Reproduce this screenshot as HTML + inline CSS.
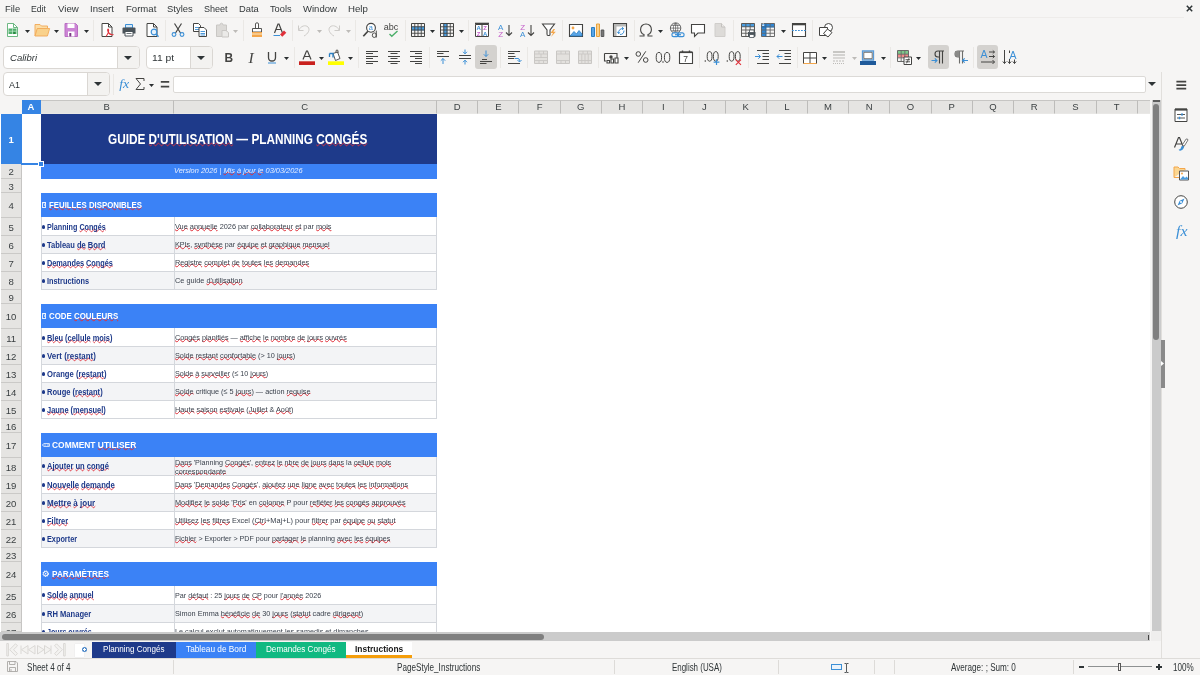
<!DOCTYPE html>
<html><head><meta charset="utf-8"><title>Instructions - Calc</title>
<style>
*{box-sizing:border-box;margin:0;padding:0}
html,body{width:1200px;height:675px;overflow:hidden;background:#f6f5f4}
body{font-family:"Liberation Sans",sans-serif;font-size:10px;color:#2e3436;position:relative}
div,span,i,svg{position:absolute}
.t{white-space:nowrap;transform-origin:0 50%;line-height:1}
u{position:static;text-decoration:underline wavy #e0303a;text-decoration-thickness:.5px;text-underline-offset:-1.7px;text-decoration-skip-ink:none}
.box{background:#fff;border:1px solid #dad7d3;border-radius:4px}
.bb{background:#f3f2f0;border-left:1px solid #dad7d3}
.ar{width:0;height:0;border-left:4px solid transparent;border-right:4px solid transparent;border-top:4px solid #2e3436}
.dd{width:0;height:0;border-left:2.3px solid transparent;border-right:2.3px solid transparent;border-top:2.8px solid #2e3436}
.dg{border-top-color:#bdbbb8}
.sp{width:1px;background:#eae8e5}
.ac{background:#d4d2cf;border-radius:3px}
.ch{top:100px;height:14px;background:#e5e4e2;border-right:1px solid #bdbcba;border-top:1px solid #c6c5c3;border-bottom:1px solid #e9e8e6;font-size:9.5px;line-height:12px;text-align:center;color:#3a3f41}
.rh{left:1px;width:21px;background:#e5e4e2;border-right:1px solid #c6c5c3;border-bottom:1px solid #cac9c7;font-size:9.6px;letter-spacing:-.2px;text-align:center;color:#3a3f41}
.sel{background:#3584e4;color:#fff;font-weight:bold;border-color:#3584e4}
.bd{left:41px;width:396px;background:#3b82f6}
.rw{left:41px;width:396px;background:#fff;border:1px solid #d4d7dc;border-top:none}
.rw.g{background:#f3f4f6}
.rw i{left:131.5px;top:0;bottom:0;width:1px;background:#d4d7dc}
.ss{width:1px;top:660px;height:14px;background:#dddbd8}
.tab{top:642px;height:15.6px}
svg{overflow:visible}
</style></head>
<body>
<div id="w" style="left:0;top:0;width:1200px;height:675px;will-change:transform">
<div style="left:0;top:17px;width:1184px;height:1px;background:#eeecea"></div>
<svg style="left:1186px;top:5px;width:7px;height:7px" viewBox="0 0 7 7"><path d="M.8 .8 6.2 6.2M6.2 .8 .8 6.2" stroke="#2e3436" stroke-width="1.5" fill="none"/></svg>
<div class="box" style="left:3px;top:46px;width:137px;height:22.5px"><div class="bb" style="right:0;top:0;bottom:0;width:22px;border-radius:0 3px 3px 0"></div><i class="ar" style="right:7px;top:8.5px"></i></div>
<div class="box" style="left:145.5px;top:46px;width:67px;height:22.5px"><div class="bb" style="right:0;top:0;bottom:0;width:22px;border-radius:0 3px 3px 0"></div><i class="ar" style="right:7px;top:8.5px"></i></div>
<div class="box" style="left:3px;top:72px;width:106.5px;height:23.5px"><div class="bb" style="right:0;top:0;bottom:0;width:22px;border-radius:0 3px 3px 0"></div><i class="ar" style="right:7px;top:8.5px"></i></div>
<div style="left:173px;top:76px;width:973px;height:16.5px;background:#fff;border:1px solid #dcdad7;border-radius:2px"></div>
<i class="ar" style="left:1148px;top:82px"></i>
<div style="left:0;top:100px;width:1151.5px;height:532.4px;background:#fff"></div>
<div style="left:0;top:100px;width:22px;height:14px;background:#f6f5f4"></div>
<div class="ch sel" style="left:22.00px;width:19.00px">A</div>
<div class="ch" style="left:41.00px;width:132.50px">B</div>
<div class="ch" style="left:173.50px;width:263.50px">C</div>
<div class="ch" style="left:437.00px;width:41.22px">D</div>
<div class="ch" style="left:478.22px;width:41.22px">E</div>
<div class="ch" style="left:519.44px;width:41.22px">F</div>
<div class="ch" style="left:560.66px;width:41.22px">G</div>
<div class="ch" style="left:601.88px;width:41.22px">H</div>
<div class="ch" style="left:643.10px;width:41.22px">I</div>
<div class="ch" style="left:684.32px;width:41.22px">J</div>
<div class="ch" style="left:725.54px;width:41.22px">K</div>
<div class="ch" style="left:766.76px;width:41.22px">L</div>
<div class="ch" style="left:807.98px;width:41.22px">M</div>
<div class="ch" style="left:849.20px;width:41.22px">N</div>
<div class="ch" style="left:890.42px;width:41.22px">O</div>
<div class="ch" style="left:931.64px;width:41.22px">P</div>
<div class="ch" style="left:972.86px;width:41.22px">Q</div>
<div class="ch" style="left:1014.08px;width:41.22px">R</div>
<div class="ch" style="left:1055.30px;width:41.22px">S</div>
<div class="ch" style="left:1096.52px;width:41.22px">T</div>
<div class="ch" style="left:1137.74px;width:13.76px"></div>
<div class="rh sel" style="top:114px;height:50.0px;line-height:51.4px;overflow:hidden">1</div>
<div class="rh" style="top:164px;height:15.0px;line-height:16.4px;overflow:hidden">2</div>
<div class="rh" style="top:179px;height:14.0px;line-height:15.4px;overflow:hidden">3</div>
<div class="rh" style="top:193px;height:25.0px;line-height:26.4px;overflow:hidden">4</div>
<div class="rh" style="top:218px;height:18.0px;line-height:19.4px;overflow:hidden">5</div>
<div class="rh" style="top:236px;height:18.0px;line-height:19.4px;overflow:hidden">6</div>
<div class="rh" style="top:254px;height:18.0px;line-height:19.4px;overflow:hidden">7</div>
<div class="rh" style="top:272px;height:18.0px;line-height:19.4px;overflow:hidden">8</div>
<div class="rh" style="top:290px;height:14.0px;line-height:15.4px;overflow:hidden">9</div>
<div class="rh" style="top:304px;height:25.0px;line-height:26.4px;overflow:hidden">10</div>
<div class="rh" style="top:329px;height:18.0px;line-height:19.4px;overflow:hidden">11</div>
<div class="rh" style="top:347px;height:18.0px;line-height:19.4px;overflow:hidden">12</div>
<div class="rh" style="top:365px;height:18.0px;line-height:19.4px;overflow:hidden">13</div>
<div class="rh" style="top:383px;height:18.0px;line-height:19.4px;overflow:hidden">14</div>
<div class="rh" style="top:401px;height:18.0px;line-height:19.4px;overflow:hidden">15</div>
<div class="rh" style="top:419px;height:14.0px;line-height:15.4px;overflow:hidden">16</div>
<div class="rh" style="top:433px;height:25.0px;line-height:26.4px;overflow:hidden">17</div>
<div class="rh" style="top:458px;height:18.0px;line-height:19.4px;overflow:hidden">18</div>
<div class="rh" style="top:476px;height:18.0px;line-height:19.4px;overflow:hidden">19</div>
<div class="rh" style="top:494px;height:18.0px;line-height:19.4px;overflow:hidden">20</div>
<div class="rh" style="top:512px;height:18.0px;line-height:19.4px;overflow:hidden">21</div>
<div class="rh" style="top:530px;height:18.0px;line-height:19.4px;overflow:hidden">22</div>
<div class="rh" style="top:548px;height:14.0px;line-height:15.4px;overflow:hidden">23</div>
<div class="rh" style="top:562px;height:25.0px;line-height:26.4px;overflow:hidden">24</div>
<div class="rh" style="top:587px;height:18.0px;line-height:19.4px;overflow:hidden">25</div>
<div class="rh" style="top:605px;height:18.0px;line-height:19.4px;overflow:hidden">26</div>
<div class="rh" style="top:623px;height:9.4px;line-height:19.4px;overflow:hidden">27</div>
<div style="left:41px;top:114px;width:396px;height:50px;background:#1e3a8a"></div>
<div style="left:41px;top:164px;width:396px;height:14.8px;background:#3b82f6"></div>
<div style="left:21px;top:163.3px;width:20px;height:1.4px;background:#3584e4"></div>
<div style="left:38.4px;top:161.4px;width:5.2px;height:5.2px;background:#3584e4;border:.8px solid #fff"></div>
<div class="bd" style="top:193px;height:24px"></div>
<div class="rw" style="top:217px;height:19px"><i></i></div>
<div class="rw g" style="top:236px;height:18px"><i></i></div>
<div class="rw" style="top:254px;height:18px"><i></i></div>
<div class="rw g" style="top:272px;height:18px"><i></i></div>
<div class="bd" style="top:304px;height:24px"></div>
<div class="rw" style="top:328px;height:19px"><i></i></div>
<div class="rw g" style="top:347px;height:18px"><i></i></div>
<div class="rw" style="top:365px;height:18px"><i></i></div>
<div class="rw g" style="top:383px;height:18px"><i></i></div>
<div class="rw" style="top:401px;height:18px"><i></i></div>
<div class="bd" style="top:433px;height:24px"></div>
<div class="rw g" style="top:457px;height:19px"><i></i></div>
<div class="rw" style="top:476px;height:18px"><i></i></div>
<div class="rw g" style="top:494px;height:18px"><i></i></div>
<div class="rw" style="top:512px;height:18px"><i></i></div>
<div class="rw g" style="top:530px;height:18px"><i></i></div>
<div class="bd" style="top:562px;height:24px"></div>
<div class="rw" style="top:586px;height:19px"><i></i></div>
<div class="rw g" style="top:605px;height:18px"><i></i></div>
<div class="rw" style="top:623px;height:18px"><i></i></div>
<div style="left:41.7px;top:201.6px;width:4.8px;height:6.6px;border:.8px solid #fff;opacity:.85"></div><span class="t" style="left:43.1px;top:202.6px;font-size:4.8px;color:#fff;font-weight:bold">?</span>
<div style="left:41.7px;top:312.6px;width:4.8px;height:6.6px;border:.8px solid #fff;opacity:.85"></div><span class="t" style="left:43.1px;top:313.6px;font-size:4.8px;color:#fff;font-weight:bold">?</span>
<svg style="left:41.5px;top:441.5px;width:8px;height:6px" viewBox="0 0 8 6"><path d="M.3 3 2 1.6H7.4V4.4H2Z" fill="none" stroke="#fff" stroke-width=".8"/><path d="M3 2.2V3.8M6 1.8V4.2" stroke="#fff" stroke-width=".6"/></svg>
<svg style="left:42px;top:569.8px;width:7.4px;height:7.4px" viewBox="0 0 8 8"><circle cx="4" cy="4" r="2.9" fill="none" stroke="#fff" stroke-width="1.1" stroke-dasharray="1.3 .6"/><circle cx="4" cy="4" r="2.3" fill="none" stroke="#fff" stroke-width=".9"/><circle cx="4" cy="4" r=".8" fill="#fff"/></svg>
<div style="left:41.6px;top:224.85px;width:3.8px;height:3.8px;border-radius:50%;background:#1e3a8a"></div>
<div style="left:41.6px;top:242.85px;width:3.8px;height:3.8px;border-radius:50%;background:#1e3a8a"></div>
<div style="left:41.6px;top:260.85px;width:3.8px;height:3.8px;border-radius:50%;background:#1e3a8a"></div>
<div style="left:41.6px;top:278.85px;width:3.8px;height:3.8px;border-radius:50%;background:#1e3a8a"></div>
<div style="left:41.6px;top:335.75px;width:3.8px;height:3.8px;border-radius:50%;background:#1e3a8a"></div>
<div style="left:41.6px;top:353.75px;width:3.8px;height:3.8px;border-radius:50%;background:#1e3a8a"></div>
<div style="left:41.6px;top:371.75px;width:3.8px;height:3.8px;border-radius:50%;background:#1e3a8a"></div>
<div style="left:41.6px;top:389.75px;width:3.8px;height:3.8px;border-radius:50%;background:#1e3a8a"></div>
<div style="left:41.6px;top:407.85px;width:3.8px;height:3.8px;border-radius:50%;background:#1e3a8a"></div>
<div style="left:41.6px;top:464.45px;width:3.8px;height:3.8px;border-radius:50%;background:#1e3a8a"></div>
<div style="left:41.6px;top:482.85px;width:3.8px;height:3.8px;border-radius:50%;background:#1e3a8a"></div>
<div style="left:41.6px;top:500.85px;width:3.8px;height:3.8px;border-radius:50%;background:#1e3a8a"></div>
<div style="left:41.6px;top:518.85px;width:3.8px;height:3.8px;border-radius:50%;background:#1e3a8a"></div>
<div style="left:41.6px;top:536.85px;width:3.8px;height:3.8px;border-radius:50%;background:#1e3a8a"></div>
<div style="left:41.6px;top:593.35px;width:3.8px;height:3.8px;border-radius:50%;background:#1e3a8a"></div>
<div style="left:41.6px;top:611.75px;width:3.8px;height:3.8px;border-radius:50%;background:#1e3a8a"></div>
<div style="left:41.6px;top:629.85px;width:3.8px;height:3.8px;border-radius:50%;background:#1e3a8a"></div>
<div style="left:0;top:0;width:1150px;height:632.4px;overflow:hidden"><span class="t" id="t23" style="left:108.40px;top:131.90px;font-size:14.20px;color:#fff;font-weight:bold;transform:scaleX(0.8308)">GUIDE <u>D'UTILISATION</u> — PLANNING <u>CONGÉS</u></span>
<span class="t" id="t24" style="left:173.70px;top:166.90px;font-size:7.80px;color:#e8efff;font-style:italic;transform:scaleX(0.9504)">Version 2026 | <u>Mis</u> <u>à</u> <u>jour</u> <u>le</u> 03/03/2026</span>
<span class="t" id="t25" style="left:48.50px;top:201.05px;font-size:9.10px;color:#fff;font-weight:bold;transform:scaleX(0.8593)"><u>FEUILLES</u> <u>DISPONIBLES</u></span>
<span class="t" id="t26" style="left:48.70px;top:312.05px;font-size:9.10px;color:#fff;font-weight:bold;transform:scaleX(0.8675)">CODE <u>COULEURS</u></span>
<span class="t" id="t27" style="left:51.90px;top:441.05px;font-size:9.10px;color:#fff;font-weight:bold;transform:scaleX(0.9264)">COMMENT <u>UTILISER</u></span>
<span class="t" id="t28" style="left:51.80px;top:570.05px;font-size:9.10px;color:#fff;font-weight:bold;transform:scaleX(0.9048)"><u>PARAMÈTRES</u></span>
<span class="t" id="t29" style="left:47.40px;top:221.70px;font-size:9.40px;color:#1e3a8a;font-weight:bold;transform:scaleX(0.7675)">Planning <u>Congés</u></span>
<span class="t" id="t30" style="left:47.40px;top:239.70px;font-size:9.40px;color:#1e3a8a;font-weight:bold;transform:scaleX(0.8027)">Tableau <u>de</u> <u>Bord</u></span>
<span class="t" id="t31" style="left:47.40px;top:257.70px;font-size:9.40px;color:#1e3a8a;font-weight:bold;transform:scaleX(0.7810)"><u>Demandes</u> <u>Congés</u></span>
<span class="t" id="t32" style="left:47.40px;top:275.70px;font-size:9.40px;color:#1e3a8a;font-weight:bold;transform:scaleX(0.7833)">Instructions</span>
<span class="t" id="t33" style="left:174.80px;top:223.10px;font-size:8.00px;color:#3b424d;transform:scaleX(0.9175)"><u>Vue</u> <u>annuelle</u> 2026 par <u>collaborateur</u> <u>et</u> par <u>mois</u></span>
<span class="t" id="t34" style="left:174.80px;top:241.10px;font-size:8.00px;color:#3b424d;transform:scaleX(0.8954)"><u>KPIs</u>, <u>synthèse</u> par <u>équipe</u> <u>et</u> <u>graphique</u> <u>mensuel</u></span>
<span class="t" id="t35" style="left:174.80px;top:259.10px;font-size:8.00px;color:#3b424d;transform:scaleX(0.9109)"><u>Registre</u> <u>complet</u> <u>de</u> <u>toutes</u> <u>les</u> <u>demandes</u></span>
<span class="t" id="t36" style="left:174.80px;top:277.10px;font-size:8.00px;color:#3b424d;transform:scaleX(0.9176)">Ce guide <u>d'utilisation</u></span>
<span class="t" id="t37" style="left:47.40px;top:332.60px;font-size:9.40px;color:#1e3a8a;font-weight:bold;transform:scaleX(0.7892)"><u>Bleu</u> (<u>cellule</u> <u>mois</u>)</span>
<span class="t" id="t38" style="left:47.40px;top:350.60px;font-size:9.40px;color:#1e3a8a;font-weight:bold;transform:scaleX(0.8431)">Vert (<u>restant</u>)</span>
<span class="t" id="t39" style="left:47.40px;top:368.60px;font-size:9.40px;color:#1e3a8a;font-weight:bold;transform:scaleX(0.8151)">Orange (<u>restant</u>)</span>
<span class="t" id="t40" style="left:47.40px;top:386.60px;font-size:9.40px;color:#1e3a8a;font-weight:bold;transform:scaleX(0.8029)">Rouge (<u>restant</u>)</span>
<span class="t" id="t41" style="left:47.40px;top:404.70px;font-size:9.40px;color:#1e3a8a;font-weight:bold;transform:scaleX(0.7946)"><u>Jaune</u> (<u>mensuel</u>)</span>
<span class="t" id="t42" style="left:174.80px;top:334.00px;font-size:8.00px;color:#3b424d;transform:scaleX(0.9047)"><u>Congés</u> <u>planifiés</u> — <u>affiche</u> <u>le</u> <u>nombre</u> <u>de</u> <u>jours</u> <u>ouvrés</u></span>
<span class="t" id="t43" style="left:174.80px;top:352.00px;font-size:8.00px;color:#3b424d;transform:scaleX(0.9106)"><u>Solde</u> <u>restant</u> <u>confortable</u> (&gt; 10 <u>jours</u>)</span>
<span class="t" id="t44" style="left:174.80px;top:370.00px;font-size:8.00px;color:#3b424d;transform:scaleX(0.8962)"><u>Solde</u> <u>à</u> <u>surveiller</u> (≤ 10 <u>jours</u>)</span>
<span class="t" id="t45" style="left:174.80px;top:388.00px;font-size:8.00px;color:#3b424d;transform:scaleX(0.9094)"><u>Solde</u> critique (≤ 5 <u>jours</u>) — action <u>requise</u></span>
<span class="t" id="t46" style="left:174.80px;top:406.10px;font-size:8.00px;color:#3b424d;transform:scaleX(0.9115)"><u>Haute</u> <u>saison</u> <u>estivale</u> (<u>Juillet</u> &amp; <u>Août</u>)</span>
<span class="t" id="t47" style="left:47.40px;top:461.30px;font-size:9.40px;color:#1e3a8a;font-weight:bold;transform:scaleX(0.8026)"><u>Ajouter</u> <u>un</u> <u>congé</u></span>
<span class="t" id="t48" style="left:47.40px;top:479.70px;font-size:9.40px;color:#1e3a8a;font-weight:bold;transform:scaleX(0.8181)"><u>Nouvelle</u> <u>demande</u></span>
<span class="t" id="t49" style="left:47.40px;top:497.70px;font-size:9.40px;color:#1e3a8a;font-weight:bold;transform:scaleX(0.8571)"><u>Mettre</u> <u>à</u> <u>jour</u></span>
<span class="t" id="t50" style="left:47.40px;top:515.70px;font-size:9.40px;color:#1e3a8a;font-weight:bold;transform:scaleX(0.7963)"><u>Filtrer</u></span>
<span class="t" id="t51" style="left:47.40px;top:533.70px;font-size:9.40px;color:#1e3a8a;font-weight:bold;transform:scaleX(0.7795)">Exporter</span>
<span class="t" id="t52" style="left:174.80px;top:459.30px;font-size:8.00px;color:#3b424d;transform:scaleX(0.8963)"><u>Dans</u> 'Planning <u>Congés</u>', <u>entrez</u> <u>le</u> <u>nbre</u> <u>de</u> <u>jours</u> <u>dans</u> la <u>cellule</u> <u>mois</u></span>
<div style="left:0;top:0;width:1150px;height:475.0px;overflow:hidden"><span class="t" id="t53" style="left:174.80px;top:468.00px;font-size:8.00px;color:#3b424d;transform:scaleX(0.9196)"><u>correspondante</u></span></div>
<span class="t" id="t54" style="left:174.80px;top:481.10px;font-size:8.00px;color:#3b424d;transform:scaleX(0.9008)"><u>Dans</u> '<u>Demandes</u> <u>Congés</u>', <u>ajoutez</u> <u>une</u> <u>ligne</u> <u>avec</u> <u>toutes</u> <u>les</u> <u>informations</u></span>
<span class="t" id="t55" style="left:174.80px;top:499.10px;font-size:8.00px;color:#3b424d;transform:scaleX(0.9115)"><u>Modifiez</u> <u>le</u> <u>solde</u> '<u>Pris</u>' en <u>colonne</u> P pour <u>refléter</u> <u>les</u> <u>congés</u> <u>approuvés</u></span>
<span class="t" id="t56" style="left:174.80px;top:517.10px;font-size:8.00px;color:#3b424d;transform:scaleX(0.9213)"><u>Utilisez</u> <u>les</u> <u>filtres</u> Excel (<u>Ctrl</u>+Maj+L) pour <u>filtrer</u> par <u>équipe</u> <u>ou</u> <u>statut</u></span>
<span class="t" id="t57" style="left:174.80px;top:535.10px;font-size:8.00px;color:#3b424d;transform:scaleX(0.8909)"><u>Fichier</u> &gt; Exporter &gt; PDF pour <u>partager</u> <u>le</u> planning <u>avec</u> <u>les</u> <u>équipes</u></span>
<span class="t" id="t58" style="left:47.40px;top:590.20px;font-size:9.40px;color:#1e3a8a;font-weight:bold;transform:scaleX(0.8000)"><u>Solde</u> <u>annuel</u></span>
<span class="t" id="t59" style="left:47.40px;top:608.60px;font-size:9.40px;color:#1e3a8a;font-weight:bold;transform:scaleX(0.8073)">RH Manager</span>
<span class="t" id="t60" style="left:47.40px;top:626.70px;font-size:9.40px;color:#1e3a8a;font-weight:bold;transform:scaleX(0.7593)">Jours ouvrés</span>
<span class="t" id="t61" style="left:174.80px;top:591.60px;font-size:8.00px;color:#3b424d;transform:scaleX(0.9000)">Par <u>défaut</u> : 25 <u>jours</u> <u>de</u> <u>CP</u> pour <u>l'année</u> 2026</span>
<span class="t" id="t62" style="left:174.80px;top:610.00px;font-size:8.00px;color:#3b424d;transform:scaleX(0.9121)">Simon Emma <u>bénéficie</u> <u>de</u> 30 <u>jours</u> (<u>statut</u> cadre <u>dirigeant</u>)</span>
<span class="t" id="t63" style="left:174.80px;top:628.10px;font-size:8.00px;color:#3b424d;transform:scaleX(0.9085)">Le calcul exclut automatiquement les samedis et dimanches</span></div>
<div style="left:0;top:632.4px;width:1150.5px;height:8.2px;background:#cbcbcb"></div>
<div style="left:1.5px;top:633.6px;width:542.5px;height:6px;border-radius:3px;background:#7f7f7f"></div>
<div style="left:1147.5px;top:634.5px;width:1px;height:5px;background:#444"></div>
<div style="left:1150px;top:100px;width:12px;height:541px;background:#f6f5f4"></div>
<div style="left:1151.5px;top:100px;width:9px;height:531px;background:#cbcbcb"></div><div style="left:1153px;top:100.4px;width:7px;height:1.6px;background:#5e5e5e"></div>
<div style="left:1153.4px;top:104px;width:5.8px;height:236px;border-radius:3px;background:#7f7f7f"></div>
<div style="left:1150.5px;top:631px;width:10px;height:10px;background:#efeeed"></div>
<div style="left:1161px;top:72px;width:1px;height:586px;background:#e1dfdc"></div>
<div style="left:1160.6px;top:340px;width:4.6px;height:48px;background:#8a8a8a"></div>
<svg style="left:1161.4px;top:361px;width:3px;height:5px" viewBox="0 0 3 5"><path d="M0 0 3 2.5 0 5Z" fill="#fff"/></svg>
<div style="left:0;top:641px;width:1161px;height:17px;background:#f6f5f4"></div>
<div class="tab" style="left:92px;width:84.2px;background:#1e3a8a"></div>
<div class="tab" style="left:176.2px;width:80.2px;background:#3b82f6"></div>
<div class="tab" style="left:256.4px;width:89.9px;background:#10b981"></div>
<div class="tab" style="left:346.3px;width:65.3px;background:#fff"></div>
<div style="left:346.3px;top:655.4px;width:65.3px;height:2.2px;background:#f59e0b"></div>
<svg style="left:6px;top:643px;width:60px;height:13.5px" viewBox="0 0 60 13.5"><g fill="#f3f2f0" stroke="#dad8d5" stroke-width="1"><path d="M.8 .5H2.4V13H.8Z"/><path d="M9.5 .8 11.5 2.8 7.5 6.7 11.5 10.6 9.5 12.6 3.6 6.7Z"/><path d="M15 2.5V11M22 2.5 15.5 6.7 22 11ZM29 2.5 22.5 6.7 29 11Z"/><path d="M45 2.5V11M31.5 2.5 38 6.7 31.5 11ZM38.5 2.5 45 6.7 38.5 11Z"/><path d="M50.5 .8 48.5 2.8 52.5 6.7 48.5 10.6 50.5 12.6 56.4 6.7Z"/><path d="M57.6 .5H59.2V13H57.6Z"/></g></svg>
<div style="left:74.6px;top:643.6px;width:9.8px;height:13.8px;background:#fff;box-shadow:0 0 1px #ddd"></div>
<div style="left:82.2px;top:646.8px;width:5px;height:5px;border-radius:50%;background:#4a86c8"></div>
<div style="left:83.4px;top:649px;width:2.6px;height:.7px;background:#fff"></div><div style="left:84.35px;top:648px;width:.7px;height:2.6px;background:#fff"></div>
<svg style="left:6.5px;top:661px;width:11px;height:11px" viewBox="0 0 11 11"><path d="M.5 .5H9L10.5 2V10.5H.5Z" fill="#f6f5f4" stroke="#aaa8a5" stroke-width=".9"/><path d="M2.5 .5V3.5H8V.5M2.5 10.5V6.5H8.5V10.5M4 8V10.5" fill="none" stroke="#aaa8a5" stroke-width=".9"/></svg>
<div style="left:0;top:658px;width:1200px;height:1px;background:#dedcd9"></div>
<div class="ss" style="left:173.3px"></div>
<div class="ss" style="left:613.5px"></div>
<div class="ss" style="left:777.5px"></div>
<div class="ss" style="left:874.0px"></div>
<div class="ss" style="left:893.5px"></div>
<div class="ss" style="left:1072.5px"></div>
<div style="left:1088px;top:666.4px;width:64px;height:1px;background:#8e9192"></div>
<div style="left:1118.3px;top:663px;width:3px;height:8px;border:1px solid #555;background:#f6f5f4"></div>
<div style="left:1078.5px;top:666px;width:5.5px;height:1.6px;background:#2e3436"></div>
<div style="left:1156px;top:666px;width:6.4px;height:1.6px;background:#2e3436"></div><div style="left:1158.4px;top:663.6px;width:1.6px;height:6.4px;background:#2e3436"></div>
<div style="left:830.5px;top:664px;width:11px;height:6.4px;border:1px solid #3b8fd6;background:#eaf3fb"></div>
<svg style="left:843.5px;top:662.5px;width:5px;height:10px" viewBox="0 0 5 10"><path d="M.5 .5H2Q2.5 .6 2.5 1.2V8.8Q2.5 9.4 2 9.5H.5M4.5 .5H3Q2.5 .6 2.5 1.2M2.5 8.8Q2.5 9.4 3 9.5H4.5" fill="none" stroke="#2e3436" stroke-width=".8"/></svg>
<span class="t" id="t0" style="left:5.00px;top:4.00px;font-size:9.80px;color:#33383a;transform:scaleX(0.9563)">File</span>
<span class="t" id="t1" style="left:31.30px;top:4.00px;font-size:9.80px;color:#33383a;transform:scaleX(0.8824)">Edit</span>
<span class="t" id="t2" style="left:58.30px;top:4.00px;font-size:9.80px;color:#33383a;transform:scaleX(0.9857)">View</span>
<span class="t" id="t3" style="left:90.30px;top:4.00px;font-size:9.80px;color:#33383a;transform:scaleX(0.9760)">Insert</span>
<span class="t" id="t4" style="left:125.70px;top:4.00px;font-size:9.80px;color:#33383a;transform:scaleX(0.9774)">Format</span>
<span class="t" id="t5" style="left:167.00px;top:4.00px;font-size:9.80px;color:#33383a;transform:scaleX(0.9630)">Styles</span>
<span class="t" id="t6" style="left:204.30px;top:4.00px;font-size:9.80px;color:#33383a;transform:scaleX(0.9231)">Sheet</span>
<span class="t" id="t7" style="left:239.30px;top:4.00px;font-size:9.80px;color:#33383a;transform:scaleX(0.9524)">Data</span>
<span class="t" id="t8" style="left:270.30px;top:4.00px;font-size:9.80px;color:#33383a;transform:scaleX(0.9435)">Tools</span>
<span class="t" id="t9" style="left:303.00px;top:4.00px;font-size:9.80px;color:#33383a;transform:scaleX(0.9714)">Window</span>
<span class="t" id="t10" style="left:348.30px;top:4.00px;font-size:9.80px;color:#33383a;transform:scaleX(0.9850)">Help</span>
<span class="t" id="t11" style="left:9.50px;top:52.80px;font-size:9.40px;color:#2e3436;font-style:italic;transform:scaleX(1.0185)">Calibri</span>
<span class="t" id="t12" style="left:152.00px;top:52.80px;font-size:9.40px;color:#2e3436;transform:scaleX(1.1000)">11 pt</span>
<span class="t" id="t13" style="left:9.00px;top:79.90px;font-size:9.40px;color:#2e3436;transform:scaleX(0.9545)">A1</span>
<span class="t" id="t14" style="left:27.40px;top:662.60px;font-size:10.00px;color:#2e3436;transform:scaleX(0.8074)">Sheet 4 of 4</span>
<span class="t" id="t15" style="left:396.60px;top:662.60px;font-size:10.00px;color:#2e3436;transform:scaleX(0.8137)">PageStyle_Instructions</span>
<span class="t" id="t16" style="left:671.50px;top:662.60px;font-size:10.00px;color:#2e3436;transform:scaleX(0.7937)">English (USA)</span>
<span class="t" id="t17" style="left:951.00px;top:662.60px;font-size:10.00px;color:#2e3436;transform:scaleX(0.8125)">Average: ; Sum: 0</span>
<span class="t" id="t18" style="left:1173.00px;top:662.60px;font-size:10.00px;color:#2e3436;transform:scaleX(0.8077)">100%</span>
<span class="t" id="t19" style="left:102.60px;top:644.10px;font-size:9.60px;color:#fff;transform:scaleX(0.8411)">Planning Congés</span>
<span class="t" id="t20" style="left:185.50px;top:644.10px;font-size:9.60px;color:#fff;transform:scaleX(0.8629)">Tableau de Bord</span>
<span class="t" id="t21" style="left:266.30px;top:644.10px;font-size:9.60px;color:#fff;transform:scaleX(0.8463)">Demandes Congés</span>
<span class="t" id="t22" style="left:354.70px;top:644.10px;font-size:9.60px;color:#1c1c1c;font-weight:bold;transform:scaleX(0.8800)">Instructions</span>
<div class="ac" style="left:475.4px;top:45.4px;width:21.4px;height:23.4px"></div>
<div class="ac" style="left:927.5px;top:45.4px;width:21.7px;height:23.4px"></div>
<div class="ac" style="left:976.7px;top:45.4px;width:21.6px;height:23.4px"></div>
<div class="sp" style="left:93.0px;top:20px;height:21px"></div>
<div class="sp" style="left:164.5px;top:20px;height:21px"></div>
<div class="sp" style="left:243.1px;top:20px;height:21px"></div>
<div class="sp" style="left:291.9px;top:20px;height:21px"></div>
<div class="sp" style="left:354.9px;top:20px;height:21px"></div>
<div class="sp" style="left:404.9px;top:20px;height:21px"></div>
<div class="sp" style="left:468.2px;top:20px;height:21px"></div>
<div class="sp" style="left:561.8px;top:20px;height:21px"></div>
<div class="sp" style="left:633.7px;top:20px;height:21px"></div>
<div class="sp" style="left:733.2px;top:20px;height:21px"></div>
<div class="sp" style="left:812.4px;top:20px;height:21px"></div>
<div class="sp" style="left:293.8px;top:47px;height:21px"></div>
<div class="sp" style="left:357.5px;top:47px;height:21px"></div>
<div class="sp" style="left:428.9px;top:47px;height:21px"></div>
<div class="sp" style="left:499.7px;top:47px;height:21px"></div>
<div class="sp" style="left:526.5px;top:47px;height:21px"></div>
<div class="sp" style="left:598.1px;top:47px;height:21px"></div>
<div class="sp" style="left:698.5px;top:47px;height:21px"></div>
<div class="sp" style="left:748.1px;top:47px;height:21px"></div>
<div class="sp" style="left:797.0px;top:47px;height:21px"></div>
<div class="sp" style="left:889.8px;top:47px;height:21px"></div>
<div class="sp" style="left:973.3px;top:47px;height:21px"></div>
<div class="sp" style="left:112.8px;top:74px;height:21px"></div>
<svg style="left:4px;top:22px;width:16px;height:16px" viewBox="0 0 16 16"><path d="M3.5 1.5H9.5L13.5 5.5V14.5H3.5Z" fill="#fff" stroke="#5db075" stroke-width="0.9" /><path d="M9.5 1.5V5.5H13.5" fill="none" stroke="#5db075" stroke-width="0.9" /><path d="M4.5 6.5H12.5V12H4.5Z" fill="#4fb06b" /><path d="M4.5 9.2H12.5M8.5 6.5V12" fill="none" stroke="#d5efdc" stroke-width="0.6" /><path d="M9.5 9.7 12 11 9.5 12.3Z" fill="#1f7a35" /></svg>
<svg style="left:34px;top:22px;width:16px;height:16px" viewBox="0 0 16 16"><path d="M1 14V2.5H6L7.5 4H13.5V6" fill="#fbdda6" stroke="#f0a856" stroke-width="0.9" /><path d="M1 14 3.2 6.5H15.6L13.4 14Z" fill="#f9d18b" stroke="#f0a856" stroke-width="0.9" /></svg>
<svg style="left:63px;top:22px;width:16px;height:16px" viewBox="0 0 16 16"><path d="M2 1.5H12.5L14.5 3.5V14.5H2Z" fill="#cc85d5" stroke="#b96cc2" stroke-width="1" /><path d="M4.5 1.5H11.5V6H4.5Z" fill="#fff" /><path d="M5 9.5H11.5V14.5H5Z" fill="#fff" /><path d="M6.3 11H8.3V14.5H6.3Z" fill="#7d3a86" /></svg>
<svg style="left:99px;top:22px;width:16px;height:16px" viewBox="0 0 16 16"><path d="M3 1.5H9.5L13 5V14.5H3Z" fill="#fff" stroke="#444442" stroke-width="1" /><path d="M9.5 1.5V5H13" fill="none" stroke="#444442" stroke-width="1" /><path d="M7 14.5C8.5 12.5 10 9 9.5 7.5C9 6.5 8.2 7.5 9 9.5C10 12 12.5 13 14.5 12.5" fill="none" stroke="#e0303a" stroke-width="1.1" /></svg>
<svg style="left:121px;top:22px;width:16px;height:16px" viewBox="0 0 16 16"><path d="M4.5 2.5H11.5V6H4.5Z" fill="#d6e9f8" stroke="#3b8fd6" stroke-width="1" /><path d="M1.5 6.5Q1.5 5.5 2.5 5.5H13.5Q14.5 5.5 14.5 6.5V11.5H1.5Z" fill="#4a5359" /><path d="M4 9.5H12V14H4Z" fill="#fff" stroke="#4a5359" stroke-width="1" /><path d="M5.5 11.5H10.5" fill="none" stroke="#4a5359" stroke-width="0.8" /></svg>
<svg style="left:144px;top:22px;width:16px;height:16px" viewBox="0 0 16 16"><path d="M3 1.5H9.5L13 5V14.5H3Z" fill="#fff" stroke="#444442" stroke-width="1" /><path d="M9.5 1.5V5H13" fill="none" stroke="#444442" stroke-width="1" /><circle cx="10" cy="10" r="2.8" fill="#e6f1fb" stroke="#3b8fd6" stroke-width="1.2"/><path d="M12 12 14.5 14.8" fill="none" stroke="#3b8fd6" stroke-width="1.4" /></svg>
<svg style="left:170px;top:22px;width:16px;height:16px" viewBox="0 0 16 16"><path d="M4.5 1.5 10.5 11M11.5 1.5 5.5 11" fill="none" stroke="#444442" stroke-width="1.2" /><circle cx="4" cy="12.5" r="1.9" fill="none" stroke="#3b8fd6" stroke-width="1.1"/><circle cx="12" cy="12.5" r="1.9" fill="none" stroke="#3b8fd6" stroke-width="1.1"/></svg>
<svg style="left:192px;top:22px;width:16px;height:16px" viewBox="0 0 16 16"><path d="M1.5 1.5H6.5L8.5 3.5V9.5H1.5Z" fill="#fff" stroke="#444442" stroke-width="1" /><path d="M3 5.5H7M3 7.5H7" fill="none" stroke="#3b8fd6" stroke-width="0.9" /><path d="M7 5.5H12L14.5 8V14.5H7Z" fill="#fff" stroke="#444442" stroke-width="1" /><path d="M8.5 9.5H13M8.5 11.5H13M8.5 13H13" fill="none" stroke="#3b8fd6" stroke-width="0.9" /></svg>
<svg style="left:214px;top:22px;width:16px;height:16px" viewBox="0 0 16 16"><path d="M2.5 3H6Q6 1.2 7.5 1.2Q9 1.2 9 3H12.5V14.5H2.5Z" fill="#dcdad7" stroke="#c9c7c4" stroke-width="1" /><path d="M8 8.5H12L14.5 10.5V15H8Z" fill="#ebeae8" stroke="#c9c7c4" stroke-width="1" /></svg>
<svg style="left:249px;top:22px;width:16px;height:16px" viewBox="0 0 16 16"><path d="M6.5 2Q6.5 .8 8 .8Q9.5 .8 9.5 2V6.5H6.5Z" fill="#fff" stroke="#444442" stroke-width="0.9" /><path d="M3.5 6.5H12.5V10H3.5Z" fill="#fff" stroke="#444442" stroke-width="0.9" /><path d="M3 10H13V15H3Z" fill="#f4a64a" /><path d="M3 12H13" fill="none" stroke="#fbe0b5" stroke-width="1.2" /></svg>
<svg style="left:271px;top:22px;width:16px;height:16px" viewBox="0 0 16 16"><path d="M3.5 11 7 2H8L11.5 11M5 7.5H10" fill="none" stroke="#444442" stroke-width="1.2" /><path d="M2.5 13.5H9" fill="none" stroke="#3b8fd6" stroke-width="1" /><path d="M9 12.5 13 8.5 15.3 10.8 11.3 14.8Z" fill="#e0303a" /></svg>
<svg style="left:296px;top:22px;width:16px;height:16px" viewBox="0 0 16 16"><path d="M2.5 3.5V8.5H7.5M2.8 8.2C4.5 4 9.5 2.5 12 5C14.5 7.5 12 12 8 14" fill="none" stroke="#cdcbc8" stroke-width="1" /></svg>
<svg style="left:326px;top:22px;width:16px;height:16px" viewBox="0 0 16 16"><path d="M13.5 3.5V8.5H8.5M13.2 8.2C11.5 4 6.5 2.5 4 5C1.5 7.5 4 12 8 14" fill="none" stroke="#cdcbc8" stroke-width="1" /></svg>
<svg style="left:362px;top:22px;width:16px;height:16px" viewBox="0 0 16 16"><circle cx="9" cy="5.8" r="4.4" fill="#fff" stroke="#444442" stroke-width="1.1"/><path d="M5.9 9.2 1.3 14.3" fill="none" stroke="#444442" stroke-width="1.7" /><text x="6.7" y="8.2" font-size="7.4" font-family="Liberation Sans" fill="#3b8fd6">a</text><path d="M14.3 8.6V15.5" fill="none" stroke="#444442" stroke-width="0.9" /><ellipse cx="12.3" cy="13.2" rx="2" ry="2.3" fill="none" stroke="#444442" stroke-width=".9"/></svg>
<svg style="left:383px;top:22px;width:16px;height:16px" viewBox="0 0 16 16"><text x="0.8" y="7.8" font-size="9" font-family="Liberation Sans" fill="#444442" textLength="14.6" lengthAdjust="spacingAndGlyphs">abc</text><path d="M6.5 12 8.8 14.3 14.5 9" fill="none" stroke="#4caf6a" stroke-width="1.4" /></svg>
<svg style="left:410px;top:22px;width:16px;height:16px" viewBox="0 0 16 16"><path d="M1.5 4.5H14.5V8.5H1.5Z" fill="#4a9de0" /><path d="M1.5 1.5H14.5V14.5H1.5Z" fill="none" stroke="#444442" stroke-width="1" /><path d="M4.75 1.5V14.5M8 1.5V14.5M11.25 1.5V14.5M1.5 4.75H14.5M1.5 8H14.5M1.5 11.25H14.5" fill="none" stroke="#444442" stroke-width="0.9" /></svg>
<svg style="left:439px;top:22px;width:16px;height:16px" viewBox="0 0 16 16"><path d="M4.5 1.5H8.5V14.5H4.5Z" fill="#4a9de0" /><path d="M1.5 1.5H14.5V14.5H1.5Z" fill="none" stroke="#444442" stroke-width="1" /><path d="M4.75 1.5V14.5M8 1.5V14.5M11.25 1.5V14.5M1.5 4.75H14.5M1.5 8H14.5M1.5 11.25H14.5" fill="none" stroke="#444442" stroke-width="0.9" /></svg>
<svg style="left:474px;top:22px;width:16px;height:16px" viewBox="0 0 16 16"><path d="M1 1.5H15" fill="none" stroke="#444442" stroke-width="1.6" /><path d="M1.5 2.5H14.5V14.5H1.5ZM8 2.5V14.5" fill="#fff" stroke="#444442" stroke-width="1" /><text x="2.6" y="8" font-size="6" font-weight="bold" font-family="Liberation Sans" fill="#3b8fd6">A</text><text x="2.8" y="14" font-size="6" font-weight="bold" font-family="Liberation Sans" fill="#c45fc9">Z</text><text x="9.3" y="8" font-size="6" font-weight="bold" font-family="Liberation Sans" fill="#c45fc9">Z</text><text x="9.1" y="14" font-size="6" font-weight="bold" font-family="Liberation Sans" fill="#3b8fd6">A</text></svg>
<svg style="left:497px;top:22px;width:16px;height:16px" viewBox="0 0 16 16"><text x="1" y="7.5" font-size="8" font-family="Liberation Sans" fill="#3b8fd6">A</text><text x="1.3" y="15" font-size="8" font-family="Liberation Sans" fill="#c45fc9">Z</text><path d="M12 3V13.5M9 10.5 12 13.5 15 10.5" fill="none" stroke="#444442" stroke-width="1.1" /></svg>
<svg style="left:519px;top:22px;width:16px;height:16px" viewBox="0 0 16 16"><text x="1.3" y="7.5" font-size="8" font-family="Liberation Sans" fill="#c45fc9">Z</text><text x="1" y="15" font-size="8" font-family="Liberation Sans" fill="#3b8fd6">A</text><path d="M12 3V13.5M9 10.5 12 13.5 15 10.5" fill="none" stroke="#444442" stroke-width="1.1" /></svg>
<svg style="left:541px;top:22px;width:16px;height:16px" viewBox="0 0 16 16"><path d="M1.5 2H13.5L9 8V12.5Q9 13.5 8 13.5H7Q6 13.5 6 12V8Z" fill="#fff" stroke="#444442" stroke-width="1.1" /><path d="M12.5 7 9.5 11H12L10 15 14.8 9.8H12.3L14 7Z" fill="#f4a64a" /></svg>
<svg style="left:568px;top:22px;width:16px;height:16px" viewBox="0 0 16 16"><path d="M1.5 2.5H14.5V14.5H1.5Z" fill="#fff" stroke="#444442" stroke-width="1.1" /><circle cx="5" cy="6" r="1.4" fill="#f4a64a"/><path d="M2 14 6 9.5 8.5 12 11 8.5 14 12V14Z" fill="#5aa5e6" stroke="#2a7fc4" stroke-width="0.8" /></svg>
<svg style="left:589px;top:22px;width:16px;height:16px" viewBox="0 0 16 16"><path d="M2.5 5.5H5.5V14.5H2.5Z" fill="#5aa5e6" stroke="#2a7fc4" stroke-width="1" /><path d="M7.5 2H10.5V14.5H7.5Z" fill="#fbd08a" stroke="#e8a23c" stroke-width="1" /><path d="M12.2 8H14.8V14.5H12.2Z" fill="#777" stroke="#555" stroke-width="1" /></svg>
<svg style="left:612px;top:22px;width:16px;height:16px" viewBox="0 0 16 16"><path d="M1.5 1.5H14.5V14.5H1.5Z" fill="#fff" stroke="#444442" stroke-width="1.1" /><path d="M2 2H14V4.5H2ZM2 4.5H4.5V14H2Z" fill="#b9b9b7" /><path d="M6.5 11.5C6.5 8 8 6.5 11.5 6.5M6.5 11.5 5.3 9.8M6.5 11.5 8.2 10.3M11.5 6.5 10 5.2M11.5 6.5 10.2 8M12 8.5C12 11 10.5 12.5 8 12.5" fill="none" stroke="#3b8fd6" stroke-width="1" /></svg>
<svg style="left:638px;top:22px;width:16px;height:16px" viewBox="0 0 16 16"><path d="M1.5 14H6V12.6C3.8 11.6 2.6 9.6 2.6 7.4C2.6 4.2 4.8 2 8 2C11.2 2 13.4 4.2 13.4 7.4C13.4 9.6 12.2 11.6 10 12.6V14H14.5" fill="none" stroke="#444442" stroke-width="1.1" /></svg>
<svg style="left:669px;top:22px;width:16px;height:16px" viewBox="0 0 16 16"><circle cx="6.6" cy="6.1" r="5.2" fill="#fff" stroke="#555" stroke-width=".9"/><path d="M1.4 6.1H11.8M6.6 .9V11.3M6.6 .9C3.6 3.2 3.6 9 6.6 11.3M6.6 .9C9.6 3.2 9.6 9 6.6 11.3M2.3 3.4H10.9M2.3 8.8H10.9" fill="none" stroke="#555" stroke-width="0.7" /><path d="M4.5 10.8H8Q9.6 10.8 9.6 12.7Q9.6 14.6 8 14.6H4.5Q2.9 14.6 2.9 12.7Q2.9 10.8 4.5 10.8Z" fill="#f6f5f4" stroke="#3b8fd6" stroke-width="1.2" /><path d="M10 10.8H13.5Q15.1 10.8 15.1 12.7Q15.1 14.6 13.5 14.6H10Q8.4 14.6 8.4 12.7Q8.4 10.8 10 10.8Z" fill="none" stroke="#3b8fd6" stroke-width="1.2" /><path d="M6 12.7H12" fill="none" stroke="#3b8fd6" stroke-width="1.2" /></svg>
<svg style="left:690px;top:22px;width:16px;height:16px" viewBox="0 0 16 16"><path d="M1.5 2.5H14.5V11H8L4.5 14.5V11H1.5Z" fill="#fff" stroke="#444442" stroke-width="1.1" /></svg>
<svg style="left:712px;top:22px;width:16px;height:16px" viewBox="0 0 16 16"><path d="M3 1.5H9.5L13 5V14.5H3Z" fill="#dddbd8" stroke="#d0cecb" stroke-width="1" /><path d="M9.5 1.5V5H13" fill="#eceae8" stroke="#c4c2bf" stroke-width="1" /></svg>
<svg style="left:740px;top:22px;width:16px;height:16px" viewBox="0 0 16 16"><path d="M1.5 1.5H14.5V5H1.5Z" fill="#4a9de0" /><path d="M1.5 1.5H14.5V14.5H1.5Z" fill="none" stroke="#5a5a58" stroke-width="1" /><path d="M5.83333 1.5V14.5M10.1667 1.5V14.5M1.5 4.75H14.5M1.5 8H14.5M1.5 11.25H14.5" fill="none" stroke="#5a5a58" stroke-width="0.9" /><path d="M8 10H15.5V14.5H8Z" fill="#4a5359" /><path d="M9.5 8H14V10.5H9.5Z" fill="#fff" stroke="#4a5359" stroke-width="0.8" /><path d="M9.5 12.5H14V15.5H9.5Z" fill="#fff" stroke="#4a5359" stroke-width="0.8" /></svg>
<svg style="left:760px;top:22px;width:16px;height:16px" viewBox="0 0 16 16"><path d="M1.5 1.5H14.5V4.8H1.5ZM1.5 1.5H5.8V14.5H1.5Z" fill="#2f86d4" /><path d="M1.5 1.5H14.5V14.5H1.5Z" fill="none" stroke="#666" stroke-width="1" /><path d="M5.83333 1.5V14.5M10.1667 1.5V14.5M1.5 4.75H14.5M1.5 8H14.5M1.5 11.25H14.5" fill="none" stroke="#666" stroke-width="0.9" /><path d="M1.5 5H14.5M5.8 1.5V14.5" fill="none" stroke="#1e6eb6" stroke-width="0.9" /><path d="M3.2 1V4M2 2.8 3.2 4 4.4 2.8" fill="none" stroke="#fff" stroke-width="0.7" /></svg>
<svg style="left:791px;top:22px;width:16px;height:16px" viewBox="0 0 16 16"><path d="M1.5 1.5H14.5V14.5H1.5Z" fill="#fff" stroke="#444442" stroke-width="1.1" /><path d="M1.5 2.2H14.5" fill="none" stroke="#444442" stroke-width="2.2" /><path d="M1 8.5H15" fill="none" stroke="#3b8fd6" stroke-width="1" stroke-dasharray="1.8 1.2"/></svg>
<svg style="left:818px;top:22px;width:16px;height:16px" viewBox="0 0 16 16"><circle cx="10.5" cy="5.5" r="4" fill="#fff" stroke="#444442" stroke-width="1"/><path d="M1.5 5.5H9.5V13.5H1.5Z" fill="#fff" stroke="#444442" stroke-width="1" /><path d="M9.5 7 14 10.5 10 15 5.5 11.5Z" fill="#fff" stroke="#444442" stroke-width="1" /></svg>
<svg style="left:221px;top:49px;width:16px;height:16px" viewBox="0 0 16 16"><text x="3.6" y="13.2" font-size="13" font-weight="bold" font-family="Liberation Sans" fill="#444442" textLength="8.6" lengthAdjust="spacingAndGlyphs">B</text></svg>
<svg style="left:244px;top:49px;width:16px;height:16px" viewBox="0 0 16 16"><text x="4.6" y="13.6" font-size="15.5" font-style="italic" font-family="Liberation Serif" fill="#444442">I</text></svg>
<svg style="left:264px;top:49px;width:16px;height:16px" viewBox="0 0 16 16"><path d="M4.5 3V8.5Q4.5 12 8 12Q11.5 12 11.5 8.5V3" fill="none" stroke="#444442" stroke-width="1.3" /><path d="M4 14H12" fill="none" stroke="#3b8fd6" stroke-width="1" /></svg>
<svg style="left:299px;top:49px;width:16px;height:16px" viewBox="0 0 16 16"><path d="M4 10.5 7.5 2H8.5L12 10.5M5.3 7.5H10.7" fill="none" stroke="#444442" stroke-width="1.2" /><path d="M0 12.3H16V16H0Z" fill="#c9211e" /></svg>
<svg style="left:328px;top:49px;width:16px;height:16px" viewBox="0 0 16 16"><path d="M0 12.3H16V16H0Z" fill="#ffff00" /><path d="M5 4.5 9.5 3 12 9.5 7.5 11.5Z" fill="#fff" stroke="#444442" stroke-width="0.9" /><path d="M8 3.5V1.5Q9 .5 10 1.5V4" fill="none" stroke="#444442" stroke-width="0.9" /><path d="M1.5 4.5H5V8.5M1.5 4.5V8" fill="none" stroke="#2a7fc4" stroke-width="1.3" /></svg>
<svg style="left:364px;top:49px;width:16px;height:16px" viewBox="0 0 16 16"><path d="M2 2.5H14M2 4.5H9M2 7.5H14M2 9.5H9M2 12.5H14M2 14.5H9" fill="none" stroke="#444442" stroke-width="1" /></svg>
<svg style="left:386px;top:49px;width:16px;height:16px" viewBox="0 0 16 16"><path d="M2 2.5H14M4.5 4.5H11.5M2 7.5H14M4.5 9.5H11.5M2 12.5H14M4.5 14.5H11.5" fill="none" stroke="#444442" stroke-width="1" /></svg>
<svg style="left:408px;top:49px;width:16px;height:16px" viewBox="0 0 16 16"><path d="M2 2.5H14M7 4.5H14M2 7.5H14M7 9.5H14M2 12.5H14M7 14.5H14" fill="none" stroke="#444442" stroke-width="1" /></svg>
<svg style="left:435px;top:49px;width:16px;height:16px" viewBox="0 0 16 16"><path d="M2 2.5H14M2 4.5H8.5M2 7.5H14" fill="none" stroke="#444442" stroke-width="1" /><path d="M8 15V9.5M5.8 11.7 8 9.5 10.2 11.7" fill="none" stroke="#3b8fd6" stroke-width="1" /></svg>
<svg style="left:457px;top:49px;width:16px;height:16px" viewBox="0 0 16 16"><path d="M2 6.5H14M2 9.5H14" fill="none" stroke="#444442" stroke-width="1" /><path d="M8 .5V4.8M6 2.8 8 4.8 10 2.8M8 15.5V11.2M6 13.2 8 11.2 10 13.2" fill="none" stroke="#3b8fd6" stroke-width="1" /></svg>
<svg style="left:478px;top:49px;width:16px;height:16px" viewBox="0 0 16 16"><path d="M4 10.5H9M2 12.5H14M2 14.5H8.5" fill="none" stroke="#444442" stroke-width="1" /><path d="M8 1.5V7.5M5.8 5.3 8 7.5 10.2 5.3" fill="none" stroke="#3b8fd6" stroke-width="1" /></svg>
<svg style="left:506px;top:49px;width:16px;height:16px" viewBox="0 0 16 16"><path d="M2 2.5H14M2 4.5H8.5M2 7.5H9.5M2 14.5H14" fill="none" stroke="#444442" stroke-width="1" /><path d="M2 9.5H8" fill="none" stroke="#444442" stroke-width="1" /><path d="M8.5 9.5H12Q13.5 9.5 13.5 11.5V12.5M11.5 11 13.5 13 15.5 11" fill="none" stroke="#3b8fd6" stroke-width="1" /></svg>
<svg style="left:533px;top:49px;width:16px;height:16px" viewBox="0 0 16 16"><path d="M1.5 2H14.5V14.5H1.5Z" fill="#e3e1de" stroke="#c9c7c4" stroke-width="1" /><path d="M1.5 5H14.5M1.5 8.5H14.5M1.5 11.5H14.5M6 2V5M10.5 2V5M6 11.5V14.5M10.5 11.5V14.5M8 5V8.5" fill="none" stroke="#c9c7c4" stroke-width="0.9" /></svg>
<svg style="left:555px;top:49px;width:16px;height:16px" viewBox="0 0 16 16"><path d="M1.5 2H14.5V14.5H1.5Z" fill="#e3e1de" stroke="#c9c7c4" stroke-width="1" /><path d="M1.5 5H14.5M1.5 11.5H14.5M6 2V5M10.5 2V5M6 11.5V14.5M10.5 11.5V14.5" fill="none" stroke="#c9c7c4" stroke-width="0.9" /></svg>
<svg style="left:577px;top:49px;width:16px;height:16px" viewBox="0 0 16 16"><path d="M1.5 2H14.5V14.5H1.5Z" fill="#e3e1de" stroke="#c9c7c4" stroke-width="1" /><path d="M1.5 5H14.5M1.5 11.5H14.5M6 2V5M10.5 2V5M4.8 5V14.5M8 5V14.5M11.2 5V14.5" fill="none" stroke="#c9c7c4" stroke-width="0.9" /></svg>
<svg style="left:603px;top:49px;width:16px;height:16px" viewBox="0 0 16 16"><path d="M1.5 4.5H14V10" fill="none" stroke="#444442" stroke-width="1.1" /><path d="M1.5 4.5V12H3" fill="none" stroke="#444442" stroke-width="1.1" /><circle cx="8" cy="8" r="1.7" fill="#444442"/><path d="M4 11.5H6.5V14H4ZM8 10H10.5V14H8ZM12 9H15V14H12Z" fill="#fff" stroke="#444442" stroke-width="1.1" /></svg>
<svg style="left:634px;top:49px;width:16px;height:16px" viewBox="0 0 16 16"><circle cx="4.3" cy="5" r="2.3" fill="none" stroke="#444442" stroke-width="1"/><circle cx="11.7" cy="11" r="2.3" fill="none" stroke="#444442" stroke-width="1"/><path d="M11.8 2.3 4.2 13.7" fill="none" stroke="#444442" stroke-width="1" /></svg>
<svg style="left:655px;top:49px;width:16px;height:16px" viewBox="0 0 16 16"><ellipse cx="3.9" cy="8.4" rx="2.7" ry="5" fill="none" stroke="#444442" stroke-width="1"/><ellipse cx="12.1" cy="8.4" rx="2.7" ry="5" fill="none" stroke="#444442" stroke-width="1"/><circle cx="8" cy="13" r=".8" fill="#444442"/></svg>
<svg style="left:678px;top:49px;width:16px;height:16px" viewBox="0 0 16 16"><path d="M1.5 3.5H14.5V14.5H1.5Z" fill="#fff" stroke="#444442" stroke-width="1.1" /><path d="M1.5 3.2H14.5" fill="none" stroke="#444442" stroke-width="1.8" /><path d="M4.5 1.5V4M11.5 1.5V4" fill="none" stroke="#444442" stroke-width="1.4" /><text x="5.2" y="13" font-size="8.5" font-family="Liberation Sans" fill="#444442">7</text></svg>
<svg style="left:704px;top:49px;width:16px;height:16px" viewBox="0 0 16 16"><circle cx="1.3" cy="12" r=".8" fill="#444442"/><ellipse cx="5.6" cy="7.4" rx="2.4" ry="4.8" fill="none" stroke="#444442" stroke-width="1"/><ellipse cx="11.8" cy="7.4" rx="2.4" ry="4.8" fill="none" stroke="#444442" stroke-width="1"/><path d="M12.5 10.2V16M9.6 13.1H15.4" fill="none" stroke="#3b8fd6" stroke-width="1.2" /></svg>
<svg style="left:726px;top:49px;width:16px;height:16px" viewBox="0 0 16 16"><circle cx="1.3" cy="12" r=".8" fill="#444442"/><ellipse cx="5.6" cy="7.4" rx="2.4" ry="4.8" fill="none" stroke="#444442" stroke-width="1"/><ellipse cx="11.8" cy="7.4" rx="2.4" ry="4.8" fill="none" stroke="#444442" stroke-width="1"/><path d="M9.8 10.6 15 15.8M15 10.6 9.8 15.8" fill="none" stroke="#e0303a" stroke-width="1.1" /></svg>
<svg style="left:754px;top:49px;width:16px;height:16px" viewBox="0 0 16 16"><path d="M3 1.5H15M8.5 4.5H15M8.5 7.5H15M8.5 10.5H15M3 14.5H15" fill="none" stroke="#444442" stroke-width="1" /><path d="M1 7.5H6.5M4.3 5.3 6.5 7.5 4.3 9.7" fill="none" stroke="#3b8fd6" stroke-width="1" /></svg>
<svg style="left:776px;top:49px;width:16px;height:16px" viewBox="0 0 16 16"><path d="M3 1.5H15M8.5 4.5H15M8.5 7.5H15M8.5 10.5H15M3 14.5H15" fill="none" stroke="#444442" stroke-width="1" /><path d="M6.5 7.5H1M3.2 5.3 1 7.5 3.2 9.7" fill="none" stroke="#3b8fd6" stroke-width="1" /></svg>
<svg style="left:802px;top:49px;width:16px;height:16px" viewBox="0 0 16 16"><path d="M1.5 3.5H14.5V14.5H1.5ZM8 3.5V14.5M1.5 9H14.5" fill="#fff" stroke="#444442" stroke-width="1" /><path d="M1.5 14.5H14.5" fill="none" stroke="#f4a64a" stroke-width="1" /></svg>
<svg style="left:831px;top:49px;width:16px;height:16px" viewBox="0 0 16 16"><path d="M2 3H14" fill="none" stroke="#bdbbb8" stroke-width="1.6" /><path d="M2 6H14" fill="none" stroke="#bdbbb8" stroke-width="1.2" /><path d="M2 9H14" fill="none" stroke="#bdbbb8" stroke-width="1" /><path d="M2 12H14" fill="none" stroke="#bdbbb8" stroke-width="1" stroke-dasharray="2 1"/><path d="M2 14.5H14" fill="none" stroke="#bdbbb8" stroke-width="1" stroke-dasharray="1 1"/></svg>
<svg style="left:860px;top:49px;width:16px;height:16px" viewBox="0 0 16 16"><path d="M2.5 2H13.5V11H2.5Z" fill="#fff" stroke="#5a9bd8" stroke-width="1.3" /><path d="M3.8 3.3H12.2V9.7H3.8Z" fill="none" stroke="#3a3a38" stroke-width="0.7" /><path d="M0 12H16V16H0Z" fill="#1f5a9a" /></svg>
<svg style="left:896px;top:49px;width:16px;height:16px" viewBox="0 0 16 16"><path d="M1.5 1.5H12.5V5H1.5Z" fill="#7cc98a" /><path d="M1.5 5H12.5V8.5H1.5Z" fill="#f08a8a" /><path d="M1.5 1.5H12.5V12.5H1.5Z" fill="none" stroke="#6a6a68" stroke-width="1" /><path d="M5.16667 1.5V12.5M8.83333 1.5V12.5M1.5 5.16667H12.5M1.5 8.83333H12.5" fill="none" stroke="#6a6a68" stroke-width="0.9" /><path d="M8 8H15.5V15.5H8Z" fill="#fff" stroke="#444442" stroke-width="1" /><path d="M9.5 10.7H14M9.5 12.8H14M10.5 14.3 13 9.2" fill="none" stroke="#444442" stroke-width="0.9" /></svg>
<svg style="left:930px;top:49px;width:16px;height:16px" viewBox="0 0 16 16"><path d="M12.5 2V14.5M9.5 2V14.5M14 2H8Q5 2 5 5Q5 8 8 8H9.5" fill="none" stroke="#444442" stroke-width="1.1" /><path d="M1.5 11.5H7M4.8 9.3 7 11.5 4.8 13.7" fill="none" stroke="#3b8fd6" stroke-width="1.1" /></svg>
<svg style="left:953px;top:49px;width:16px;height:16px" viewBox="0 0 16 16"><path d="M6.5 2V14.5M9.5 2V14.5M11 2H5Q2 2 2 5Q2 8 5 8H6.5" fill="none" stroke="#6e6e6c" stroke-width="1.1" /><path d="M2 2H6.5V8H5Q2 8 2 5Z" fill="#8a8a88" /><path d="M15 11.5H9.5M11.7 9.3 9.5 11.5 11.7 13.7" fill="none" stroke="#3b8fd6" stroke-width="1.1" /></svg>
<svg style="left:980px;top:49px;width:16px;height:16px" viewBox="0 0 16 16"><text x="0.5" y="9" font-size="10.5" font-family="Liberation Sans" fill="#3b8fd6">A</text><path d="M9 3H14.5M12.8 1.5 14.5 3 12.8 4.5M9 7.5H14.5M12.8 6 14.5 7.5 12.8 9M1 13H14.5M12.5 11 14.5 13 12.5 15" fill="none" stroke="#444442" stroke-width="1" /></svg>
<svg style="left:1002px;top:49px;width:16px;height:16px" viewBox="0 0 16 16"><text x="7.5" y="9.5" font-size="10.5" font-family="Liberation Sans" fill="#3b8fd6">A</text><path d="M2.5 1V14.5M.8 12.5 2.5 14.5 4.2 12.5M7.5 1.5V4M7.5 10V14.5M5.8 12.5 7.5 14.5 9.2 12.5M12.5 10.5V14.5M10.8 12.5 12.5 14.5 14.2 12.5" fill="none" stroke="#444442" stroke-width="1" /></svg>
<svg style="left:25.1px;top:30.0px;width:5px;height:3px" viewBox="0 0 5 3"><path d="M0 0H5L2.5 3Z" fill="#2a2e30"/></svg>
<svg style="left:54.2px;top:30.0px;width:5px;height:3px" viewBox="0 0 5 3"><path d="M0 0H5L2.5 3Z" fill="#2a2e30"/></svg>
<svg style="left:83.7px;top:30.0px;width:5px;height:3px" viewBox="0 0 5 3"><path d="M0 0H5L2.5 3Z" fill="#2a2e30"/></svg>
<svg style="left:233.3px;top:30.0px;width:5px;height:3px" viewBox="0 0 5 3"><path d="M0 0H5L2.5 3Z" fill="#bdbbb8"/></svg>
<svg style="left:316.8px;top:30.0px;width:5px;height:3px" viewBox="0 0 5 3"><path d="M0 0H5L2.5 3Z" fill="#bdbbb8"/></svg>
<svg style="left:346.4px;top:30.0px;width:5px;height:3px" viewBox="0 0 5 3"><path d="M0 0H5L2.5 3Z" fill="#bdbbb8"/></svg>
<svg style="left:430.0px;top:30.0px;width:5px;height:3px" viewBox="0 0 5 3"><path d="M0 0H5L2.5 3Z" fill="#2a2e30"/></svg>
<svg style="left:459.1px;top:30.0px;width:5px;height:3px" viewBox="0 0 5 3"><path d="M0 0H5L2.5 3Z" fill="#2a2e30"/></svg>
<svg style="left:658.0px;top:30.0px;width:5px;height:3px" viewBox="0 0 5 3"><path d="M0 0H5L2.5 3Z" fill="#2a2e30"/></svg>
<svg style="left:780.5px;top:30.0px;width:5px;height:3px" viewBox="0 0 5 3"><path d="M0 0H5L2.5 3Z" fill="#2a2e30"/></svg>
<svg style="left:284.3px;top:57.0px;width:5px;height:3px" viewBox="0 0 5 3"><path d="M0 0H5L2.5 3Z" fill="#2a2e30"/></svg>
<svg style="left:318.8px;top:57.0px;width:5px;height:3px" viewBox="0 0 5 3"><path d="M0 0H5L2.5 3Z" fill="#2a2e30"/></svg>
<svg style="left:348.1px;top:57.0px;width:5px;height:3px" viewBox="0 0 5 3"><path d="M0 0H5L2.5 3Z" fill="#2a2e30"/></svg>
<svg style="left:623.7px;top:57.0px;width:5px;height:3px" viewBox="0 0 5 3"><path d="M0 0H5L2.5 3Z" fill="#2a2e30"/></svg>
<svg style="left:822.3px;top:57.0px;width:5px;height:3px" viewBox="0 0 5 3"><path d="M0 0H5L2.5 3Z" fill="#2a2e30"/></svg>
<svg style="left:851.5px;top:57.0px;width:5px;height:3px" viewBox="0 0 5 3"><path d="M0 0H5L2.5 3Z" fill="#bdbbb8"/></svg>
<svg style="left:880.5px;top:57.0px;width:5px;height:3px" viewBox="0 0 5 3"><path d="M0 0H5L2.5 3Z" fill="#2a2e30"/></svg>
<svg style="left:915.5px;top:57.0px;width:5px;height:3px" viewBox="0 0 5 3"><path d="M0 0H5L2.5 3Z" fill="#2a2e30"/></svg>
<svg style="left:117px;top:76px;width:16px;height:16px" viewBox="0 0 16 16"><text x="2.2" y="12.2" font-size="13.5" font-style="italic" font-family="Liberation Serif" fill="#3b8fd6" textLength="10" lengthAdjust="spacingAndGlyphs">fx</text></svg>
<svg style="left:132px;top:76px;width:16px;height:16px" viewBox="0 0 16 16"><path d="M12 5V2.5H4L8.5 8 4 13.5H12V11" fill="none" stroke="#444442" stroke-width="1" /></svg>
<svg style="left:157px;top:76px;width:16px;height:16px" viewBox="0 0 16 16"><path d="M3.8 5.8H12.2M3.8 10.6H12.2" fill="none" stroke="#444442" stroke-width="1.7" /></svg>
<svg style="left:149.3px;top:83.7px;width:5px;height:3px" viewBox="0 0 5 3"><path d="M0 0H5L2.5 3Z" fill="#2a2e30"/></svg>
<svg style="left:1173px;top:77px;width:16px;height:16px" viewBox="0 0 16 16"><path d="M3.4 4.6H13.2M3.4 8.1H13.2M3.4 11.6H13.2" fill="none" stroke="#444442" stroke-width="1.7" /></svg>
<svg style="left:1173px;top:107px;width:16px;height:16px" viewBox="0 0 16 16"><path d="M2 2H14V14.5H2Z" fill="#fff" stroke="#444442" stroke-width="1" /><path d="M2 2.6H14" fill="none" stroke="#444442" stroke-width="2" /><path d="M4 7.5H12M4 11H12" fill="none" stroke="#444442" stroke-width="0.9" /><path d="M9 6.3V8.7M6.5 9.8V12.2" fill="none" stroke="#3b8fd6" stroke-width="1.4" /></svg>
<svg style="left:1173px;top:136px;width:16px;height:16px" viewBox="0 0 16 16"><path d="M1.5 11.5 5.5 1.5H6.5L10.5 11.5M3 8H9" fill="none" stroke="#444442" stroke-width="1.2" /><path d="M15 4 11.2 10.2 9.2 9 13.2 3Q14.6 2.4 15 4Z" fill="#fff" stroke="#555" stroke-width="0.8" /><path d="M10.8 10.4Q11 13.5 7.8 14.6Q6.2 14.8 5.6 13.8Q8 13.2 8.6 10.2Q9.8 9.4 10.8 10.4Z" fill="#3b8fd6" /></svg>
<svg style="left:1173px;top:165px;width:16px;height:16px" viewBox="0 0 16 16"><path d="M1 12.5V2H5L6.5 3.5H12V5" fill="#fbd691" stroke="#f4a64a" stroke-width="1" /><path d="M1 12.5H6" fill="none" stroke="#f4a64a" stroke-width="1" /><path d="M6.5 6H15.5V15H6.5Z" fill="#fff" stroke="#555" stroke-width="1" /><path d="M7 14.5 10 11 12 13 13.5 11.5 15 13V14.5Z" fill="#4a9de0" /><circle cx="9" cy="8.5" r="1" fill="#f4a64a"/></svg>
<svg style="left:1173px;top:194px;width:16px;height:16px" viewBox="0 0 16 16"><circle cx="8" cy="8" r="6.3" fill="#fff" stroke="#444442" stroke-width="1"/><path d="M11.5 4.5 9.3 9.3 4.5 11.5 6.7 6.7Z" fill="#3b8fd6" /><circle cx="8" cy="8" r="1" fill="#fff"/></svg>
<svg style="left:1173px;top:223px;width:16px;height:16px" viewBox="0 0 16 16"><text x="3" y="13" font-size="15.5" font-style="italic" font-family="Liberation Serif" fill="#3b8fd6" textLength="11.5" lengthAdjust="spacingAndGlyphs">fx</text></svg>
</div>
</body></html>
